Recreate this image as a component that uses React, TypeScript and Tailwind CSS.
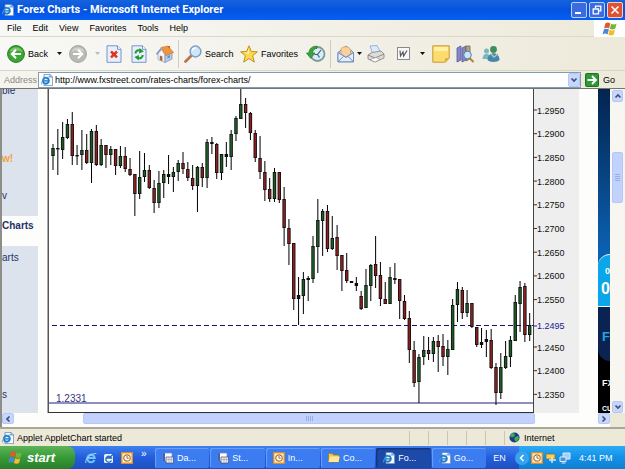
import React from "react";

type Candle = [number, number, number, number, "g" | "r" | "k"];

// high, body top, body bottom, low, colour
const candles: Candle[] = [
  [144, 148, 156, 170, "g"], [129, 148, 149, 175, "k"], [122, 137, 150, 159, "g"], [119, 124, 138, 139, "g"],
  [112, 124, 156, 165, "r"], [145, 155, 156, 165, "k"], [130, 150, 155, 170, "g"], [134, 150, 163, 164, "r"],
  [129, 131, 163, 183, "g"], [125, 131, 165, 166, "r"], [139, 145, 165, 166, "g"], [145, 145, 155, 168, "r"],
  [146, 149, 155, 165, "g"], [149, 149, 166, 175, "r"], [146, 156, 166, 168, "g"], [147, 156, 169, 172, "r"],
  [158, 169, 175, 176, "r"], [174, 174, 194, 216, "r"], [151, 177, 194, 199, "g"], [153, 170, 177, 182, "g"],
  [165, 170, 188, 189, "r"], [180, 188, 203, 213, "r"], [171, 183, 203, 208, "g"], [170, 174, 183, 198, "g"],
  [155, 174, 177, 184, "r"], [167, 172, 177, 192, "g"], [160, 163, 172, 181, "g"], [152, 163, 169, 174, "r"],
  [162, 169, 178, 181, "r"], [165, 178, 186, 190, "r"], [166, 167, 186, 212, "g"], [163, 167, 178, 187, "r"],
  [139, 142, 178, 188, "g"], [137, 142, 144, 154, "k"], [143, 144, 173, 179, "r"], [154, 154, 173, 180, "g"],
  [142, 154, 157, 167, "k"], [130, 134, 157, 170, "g"], [116, 118, 134, 141, "g"], [88, 104, 119, 119, "g"],
  [98, 104, 113, 128, "r"], [112, 113, 133, 140, "r"], [130, 133, 158, 162, "r"], [136, 158, 172, 179, "r"],
  [161, 172, 190, 201, "r"], [178, 189, 199, 202, "r"], [168, 172, 199, 202, "g"], [172, 172, 200, 203, "r"],
  [187, 199, 228, 246, "r"], [219, 228, 244, 265, "r"], [243, 243, 299, 310, "r"], [277, 295, 299, 325, "k"],
  [272, 279, 296, 314, "g"], [276, 278, 280, 301, "k"], [236, 246, 279, 283, "g"], [199, 220, 247, 273, "g"],
  [209, 211, 221, 256, "g"], [205, 211, 249, 252, "r"], [216, 238, 249, 250, "g"], [225, 237, 256, 270, "r"],
  [255, 255, 271, 291, "r"], [253, 270, 281, 283, "r"], [281, 281, 283, 283, "k"], [277, 283, 286, 291, "k"],
  [291, 296, 309, 310, "r"], [269, 285, 308, 308, "g"], [264, 265, 286, 301, "g"], [236, 264, 276, 288, "r"],
  [262, 275, 299, 306, "r"], [282, 299, 304, 304, "r"], [267, 277, 304, 304, "g"], [263, 278, 280, 284, "k"],
  [279, 279, 301, 319, "r"], [295, 301, 319, 320, "r"], [311, 318, 350, 363, "r"], [341, 350, 383, 387, "r"],
  [354, 357, 382, 403, "g"], [336, 350, 357, 365, "g"], [337, 350, 354, 360, "r"], [337, 341, 354, 362, "g"],
  [335, 341, 347, 372, "r"], [334, 346, 357, 366, "r"], [340, 349, 357, 375, "g"], [299, 305, 350, 350, "g"],
  [282, 289, 305, 322, "g"], [287, 290, 313, 319, "r"], [290, 303, 313, 317, "g"], [303, 303, 327, 328, "r"],
  [327, 327, 345, 347, "r"], [328, 342, 345, 348, "g"], [330, 339, 342, 357, "g"], [329, 340, 368, 369, "r"],
  [363, 367, 393, 405, "r"], [353, 367, 393, 399, "g"], [341, 356, 368, 369, "g"], [336, 340, 357, 367, "g"],
  [295, 302, 341, 341, "g"], [281, 287, 304, 332, "g"], [283, 286, 335, 342, "r"], [313, 325, 335, 341, "g"],
];

const fills = { g: "#1c5a26", r: "#8a1f1f", k: "#111111" };

const prices = ["1.2950", "1.2900", "1.2850", "1.2800", "1.2750", "1.2700", "1.2650", "1.2600", "1.2550", "", "1.2450", "1.2400", "1.2350"];

function Chart() {
  return (
    <svg viewBox="47 89 532 324" className="h-[324px] w-[532px] shrink-0" role="img" aria-label="EUR/USD candlestick chart" fontFamily="'Liberation Sans', Arial, sans-serif">
      <rect x="47" y="89" width="487" height="324" fill="#fff" />
      <rect x="534" y="89" width="45" height="324" fill="#eee" />
      <rect x="47" y="89" width="1" height="324" fill="#aaa" />
      <rect x="48" y="89" width="1" height="324" fill="#555" />
      <rect x="533" y="89" width="1" height="324" fill="#4a4238" />
      <rect x="48" y="412" width="486" height="1" fill="#333" />
      <path d="M52 325.5H533" stroke="#14146a" strokeDasharray="5 3" />
      <path d="M49 403H533" stroke="#6a68a8" strokeWidth="1.6" />
      {candles.map(([hi, top, bottom, lo, c], i) => {
        const x = 53 + i * 4.815;
        return (
          <g key={i}>
            <rect x={x - 0.5} y={hi} width="1" height={lo - hi} fill="#000" />
            <rect x={x - 1.7} y={top} width="3.4" height={Math.max(bottom - top, 1.4)} fill="#0c0c0c" />
            {bottom - top > 3 && <rect x={x - 0.9} y={top + 0.8} width="1.8" height={bottom - top - 1.6} fill={fills[c]} />}
          </g>
        );
      })}
      {prices.map((p, i) =>
        p ? (
          <g key={p}>
            <path d={`M533 ${110 + i * 23.7}h4`} stroke="#333" />
            <text x="537" y={113.5 + i * 23.7} fontSize="9" fill="#111">{p}</text>
          </g>
        ) : null
      )}
      <path d="M533 326h4" stroke="#1a1a90" />
      <text x="537" y="329" fontSize="9" fill="#1a1a90">1.2495</text>
      <text x="56" y="402" fontSize="10" fill="#34347e">1.2331</text>
    </svg>
  );
}

function IePage({ className = "size-3" }: { className?: string }) {
  return (
    <svg viewBox="0 0 16 16" className={`${className} shrink-0`} aria-hidden="true">
      <path d="M4 .5h8l3.5 3.5v11.5H4z" fill="#f8fbff" stroke="#5a7fb8" />
      <path d="M12 .5V4h3.5" fill="#bcd3f2" stroke="#5a7fb8" />
      <circle cx="6.5" cy="9" r="4" fill="#e8f6ff" stroke="#1f78c8" strokeWidth="2.4" />
      <path d="M3 9.2h7.5" stroke="#1f78c8" strokeWidth="1.8" />
      <path d="M1 14C-1 10 7 3 12 4" fill="none" stroke="#4aa6e0" strokeWidth="1.2" />
    </svg>
  );
}

function Flag({ className }: { className: string }) {
  return (
    <svg viewBox="0 0 20 18" className={`${className} shrink-0`} aria-hidden="true">
      <path d="M4 2c2-1.6 4-1.6 6.4-.2L8.8 8.4C6.600 7 4.600 7.200 2.400 8.400z" fill="#e4582c" />
      <path d="M11.400 2.300c2.400 1.400 4.600 1.400 7 .1l-1.700 6.400c-2.300 1.300-4.500 1.200-6.900 0z" fill="#74b43c" />
      <path d="M2.100 9.500c2.200-1.300 4.200-1.300 6.400 0L6.900 16C4.800 14.500 2.600 14.600.4 16z" fill="#4b86dc" />
      <path d="M9.500 9.900c2.400 1.400 4.600 1.300 6.900.1L14.700 16.400c-2.300 1.300-4.500 1.200-6.900-.1z" fill="#f4bd2c" />
    </svg>
  );
}

function Arrow({ green }: { green?: boolean }) {
  return (
    <svg viewBox="0 0 18 18" className="size-[18px] shrink-0" aria-hidden="true">
      <circle cx="9" cy="9" r="8.400" fill={green ? "#3da733" : "#b9b9b6"} stroke={green ? "#237a20" : "#a3a3a0"} />
      <path d="M2.500 7A7 7 0 0 1 15.500 7Q9 3.500 2.500 7" fill="#fff" opacity=".35" />
      <path d={green ? "M14 9H5.500M9 4.800L4.800 9 9 13.200" : "M4 9h8.500M9 4.800L13.200 9 9 13.200"} fill="none" stroke="#fff" strokeWidth="2.100" />
    </svg>
  );
}

function Caret({ faded }: { faded?: boolean }) {
  return (
    <svg viewBox="0 0 5 3" className="h-[3px] w-[5px] shrink-0" aria-hidden="true">
      <path d="M0 0h5L2.500 3z" fill={faded ? "#bbb" : "#111"} />
    </svg>
  );
}

function StopIcon() {
  return (
    <svg viewBox="0 0 16 18" className="h-[18px] w-4" aria-hidden="true">
      <path d="M1 .8h10.500L15 4.300v13H1z" fill="#e6effd" stroke="#7794c8" />
      <path d="M11.500.8v3.500H15" fill="#fff" stroke="#7794c8" />
      <path d="M5 6.500l6 5.800M11 6.500l-6 5.800" stroke="#e03418" strokeWidth="2.500" />
    </svg>
  );
}

function RefreshIcon() {
  return (
    <svg viewBox="0 0 16 18" className="h-[18px] w-4" aria-hidden="true">
      <path d="M1 .8h10.500L15 4.300v13H1z" fill="#e6effd" stroke="#7794c8" />
      <path d="M11.500.8v3.500H15" fill="#fff" stroke="#7794c8" />
      <path d="M4.500 8.500c0-3 3-4 5.500-2.800" fill="none" stroke="#1f9a2c" strokeWidth="2" />
      <path d="M8.500 3l4.300 3.400-4.600 2z" fill="#1f9a2c" />
      <path d="M11.700 10c0 3-3 4-5.500 2.800" fill="none" stroke="#1f9a2c" strokeWidth="2" />
      <path d="M7.700 15.500L3.400 12.100l4.600-2z" fill="#1f9a2c" />
    </svg>
  );
}

function HomeIcon() {
  return (
    <svg viewBox="0 0 19 18" className="h-[18px] w-[19px]" aria-hidden="true">
      <path d="M3 8v6.500l7 3V9.500L6 4z" fill="#f2f5fb" stroke="#8b9cc0" strokeWidth=".7" />
      <path d="M10 9.500v8l7-3.500V7z" fill="#b9cbec" stroke="#7189bb" strokeWidth=".7" />
      <path d="M6 2.500L.8 9l1.400 1L6.300 5z" fill="#8498c0" />
      <path d="M6 2.500l7-1.500 5.500 6.500-7.500 3z" fill="#f0953e" stroke="#c96e1e" strokeWidth=".6" />
      <path d="M12.500 1h2.500v3" fill="#cf5b30" />
      <path d="M4.800 10.500l2.600.9v4.800l-2.600-1.100z" fill="#a76a34" />
      <path d="M12.500 11l2.500-1v2.500l-2.500 1z" fill="#6390d6" />
    </svg>
  );
}

function SearchIcon({ className = "size-[18px]" }: { className?: string }) {
  return (
    <svg viewBox="0 0 18 18" className={className} aria-hidden="true">
      <path d="M1.500 16.500l6-6" stroke="#b87649" strokeWidth="2.800" strokeLinecap="round" />
      <circle cx="11.500" cy="6.500" r="5.400" fill="#cce7fa" stroke="#7f9ec8" strokeWidth="1.500" />
      <path d="M8.300 5.500c.6-1.600 1.800-2.400 3.400-2.400" fill="none" stroke="#fff" strokeWidth="1.500" />
    </svg>
  );
}

function StarIcon() {
  return (
    <svg viewBox="0 0 18 18" className="size-[18px]" aria-hidden="true">
      <path d="M9 .8l2.300 5.700 6.100.3-4.800 3.900 1.700 6.400L9 13.500l-5.300 3.600 1.700-6.400L.6 6.800l6.100-.3z" fill="#fcd84e" stroke="#c4901a" />
      <path d="M9 3v6L4 7.800l3.500-.3z" fill="#fff4b4" />
    </svg>
  );
}

function HistoryIcon() {
  return (
    <svg viewBox="0 0 20 18" className="h-[18px] w-5" aria-hidden="true">
      <circle cx="11.500" cy="9" r="7" fill="#dcecf6" stroke="#7b9a98" strokeWidth="1.800" />
      <path d="M11.500 9.500L15 5M11.500 9.500H8.500M11.500 9.500l2 3" stroke="#375f86" strokeWidth="1.200" />
      <path d="M11 1.200C6 1 3 4 3 8H.5l4.200 5.300L9 8H6.500c0-3 2-4.500 4.500-4.600z" fill="#3ca53a" stroke="#1d7423" strokeWidth=".7" />
    </svg>
  );
}

function MailIcon() {
  return (
    <svg viewBox="0 0 18 18" className="size-[18px]" aria-hidden="true">
      <path d="M1 7.500L9 1l7.500 6.500v9.300H1z" fill="#b5cdf0" stroke="#6e8cc0" />
      <path d="M4 3.500c3-2.800 8-2 9.500.8V9L9 12 4 9z" fill="#fbd09a" stroke="#d59a5c" strokeWidth=".7" />
      <path d="M1 7.500l8 5 7.500-5v9.300H1z" fill="#e3effc" stroke="#6e8cc0" />
      <path d="M1 16.800l5.500-5.500M16.500 16.800L11 11.300" stroke="#6e8cc0" />
    </svg>
  );
}

function PrinterIcon() {
  return (
    <svg viewBox="0 0 18 18" className="size-[18px]" aria-hidden="true">
      <path d="M3 1l7-.5 4 7.500-8 1.500z" fill="#dcebfc" stroke="#88a2cc" strokeWidth=".8" />
      <path d="M1 10l4-2.500 9-1.500 3 3v4l-9 4L1 14z" fill="#dddcd6" stroke="#808080" strokeWidth=".8" />
      <path d="M1 10l7 3 9-4" fill="none" stroke="#777" strokeWidth=".8" />
      <path d="M3 14.500l6-2 4 2-5 2.500z" fill="#fff" stroke="#888" strokeWidth=".6" />
    </svg>
  );
}

function WordIcon() {
  return (
    <svg viewBox="0 0 13 13" className="size-[13px]" aria-hidden="true">
      <rect x=".5" y=".5" width="12" height="12" fill="#f8f8f8" stroke="#8a8a8a" />
      <path d="M3 3.500l.5 5.500L6 5l.6 4L10 3.500" fill="none" stroke="#555" strokeWidth="1.200" />
    </svg>
  );
}

function NoteIcon() {
  return (
    <svg viewBox="0 0 18 18" className="size-[18px]" aria-hidden="true">
      <path d="M.8.8h16.400v12.500l-4 3.900H.8z" fill="#fbdc6c" stroke="#c69a34" />
      <path d="M2 2h14v4H2z" fill="#fff0a4" />
      <path d="M17 13.300h-4V17z" fill="#e3a737" />
    </svg>
  );
}

function BooksIcon() {
  return (
    <svg viewBox="0 0 18 18" className="size-[18px]" aria-hidden="true">
      <path d="M1 3l4-2v14l-4 2zM6 3l4-2v14l-4 2z" fill="#8588c8" stroke="#55589a" strokeWidth=".8" />
      <path d="M10 1h4v13l-4 2z" fill="#b8a078" stroke="#77694a" strokeWidth=".8" />
      <path d="M13.500 13l4 4" stroke="#b48736" strokeWidth="2" />
      <circle cx="11.500" cy="10" r="3.800" fill="#c5e6fa" stroke="#5b7fae" />
    </svg>
  );
}

function MessengerIcon() {
  return (
    <svg viewBox="0 0 18 18" className="size-[18px]" aria-hidden="true">
      <circle cx="4.500" cy="6" r="2.500" fill="#7bb7c2" />
      <path d="M.5 14c0-7 8-7 8 0z" fill="#7bb7c2" />
      <circle cx="11.500" cy="4.500" r="3.400" fill="#3f8c5c" />
      <path d="M5.500 15c0-9 12-9 12 0-2 2.500-10 2.500-12 0z" fill="#4a84ac" />
      <path d="M9 9l3 3 4-3" stroke="#99d0b0" strokeWidth="1.500" fill="none" />
    </svg>
  );
}

function Chevron({ dir }: { dir: "up" | "down" | "left" | "right" }) {
  const d = { up: "M1.500 5.500L4 3l2.500 2.500", down: "M1.500 2.500L4 5l2.500-2.500", left: "M5.500 1.500L3 4l2.500 2.500", right: "M2.500 1.500L5 4 2.500 6.500" }[dir];
  return (
    <svg viewBox="0 0 8 8" className="size-2" aria-hidden="true">
      <path d={d} fill="none" stroke="#40507c" strokeWidth="1.700" />
    </svg>
  );
}

const scrollButton = "flex shrink-0 items-center justify-center rounded-xs border border-[#b4c8f6] bg-[#c8d6fb]";

function ClockIcon() {
  return (
    <svg viewBox="0 0 12 12" className="size-3 shrink-0" aria-hidden="true">
      <rect x=".7" y=".7" width="10.600" height="10.600" fill="#fff2cf" stroke="#d98d2c" strokeWidth="1.400" />
      <circle cx="6" cy="6" r="3.200" fill="#fff" stroke="#b9752a" strokeWidth="1.200" />
      <path d="M6 4v2.200h1.700" fill="none" stroke="#8a5620" strokeWidth=".9" />
    </svg>
  );
}

function DocIcon() {
  return (
    <svg viewBox="0 0 12 12" className="size-3 shrink-0" aria-hidden="true">
      <path d="M1 1h9v8H1z" fill="#fff" stroke="#7388b8" strokeWidth=".7" />
      <path d="M1 1h2v8H1z" fill="#4464b0" />
      <path d="M4 5h7.500v6H4z" fill="#e8edf8" stroke="#4a4a60" strokeWidth=".7" />
      <path d="M5 7.500h6M7 5.500V10M9.300 5.500V10" stroke="#99a" strokeWidth=".6" />
    </svg>
  );
}

function FolderIcon() {
  return (
    <svg viewBox="0 0 12 11" className="h-[11px] w-3 shrink-0" aria-hidden="true">
      <path d="M.5 1.500h4l1 1.500H11v7H.5z" fill="#efc44c" stroke="#9d7a24" strokeWidth=".7" />
      <path d="M2 4.500h9.700L10.500 10H.5z" fill="#fde993" />
    </svg>
  );
}

function IeLetter() {
  return (
    <svg viewBox="0 0 12 12" className="size-3 shrink-0" aria-hidden="true">
      <path d="M9.500 8A3.800 3.800 0 1 1 9.800 6H3" fill="none" stroke="#6fc3f8" strokeWidth="2" />
      <path d="M1 11C-1 8 6 1 11.300 1.500" fill="none" stroke="#a9dcff" />
    </svg>
  );
}

function ExpressIcon() {
  return (
    <svg viewBox="0 0 12 12" className="size-3 shrink-0" aria-hidden="true">
      <rect x="1" y="2" width="9" height="9" rx="1.500" fill="#e6f2fd" />
      <path d="M8.500 8.500A3 3 0 1 1 8.500 6H3.500M6 6l5-4.500" fill="none" stroke="#2a68b8" strokeWidth="1.300" />
    </svg>
  );
}

const tasks = [
  { label: "Da...", icon: <DocIcon /> },
  { label: "St...", icon: <DocIcon /> },
  { label: "In...", icon: <ClockIcon /> },
  { label: "Co...", icon: <FolderIcon /> },
  { label: "Fo...", icon: <IePage />, active: true },
  { label: "Go...", icon: <IePage /> },
];

export default function App() {
  return (
    <div className="flex h-screen flex-col overflow-hidden bg-[#ece9d8] font-['Liberation_Sans',Arial,sans-serif] text-[9px] leading-3 text-black">
      <header className="flex h-5 shrink-0 items-center bg-linear-to-b from-[#1663dc] via-[#0452e0] to-[#0560f4] pr-0.5 pl-0.5">
        <IePage />
        <h1 className="ml-[3px] flex-1 font-[Roboto,sans-serif] text-[11px] font-bold text-white">Forex Charts - Microsoft Internet Explorer</h1>
        <div className="flex gap-0.5">
          <button aria-label="Minimize" className="flex size-4 items-end rounded-xs border border-[#bcd0f8] bg-[#3a6ce0] p-[3px]"><span className="h-0.5 w-1.5 bg-white" /></button>
          <button aria-label="Restore" className="flex size-4 items-center justify-center rounded-xs border border-[#bcd0f8] bg-[#3a6ce0]">
            <svg viewBox="0 0 10 10" className="size-2.5" aria-hidden="true"><path d="M3.500 3V1.200h5.300v4.600H7M1.200 4h5.300v4.800H1.200z" fill="none" stroke="#fff" strokeWidth="1.300" /></svg>
          </button>
          <button aria-label="Close" className="flex size-4 items-center justify-center rounded-xs border border-[#f3cfc8] bg-[#de5133]">
            <svg viewBox="0 0 10 10" className="size-2.5" aria-hidden="true"><path d="M1.500 1.500l7 7M8.500 1.500l-7 7" stroke="#fff" strokeWidth="1.700" /></svg>
          </button>
        </div>
      </header>

      <nav className="flex h-[17px] shrink-0 items-stretch bg-linear-to-r from-[#f8f8f6] to-[#edeadb]">
        <div className="flex flex-1 items-center gap-[11px] border-b border-[#dcd8c8] pl-[7px]">
          {["File", "Edit", "View", "Favorites", "Tools", "Help"].map((m) => (
            <button key={m}>{m}</button>
          ))}
        </div>
        <div className="flex w-[31px] items-center justify-center bg-white"><Flag className="h-3.5 w-4" /></div>
      </nav>

      <div className="flex h-[34px] shrink-0 items-center border-b border-[#dad6c6] bg-linear-to-r from-[#f8f8f6] to-[#edeadb] pl-[7px]">
        <button className="flex w-[62px] items-center gap-[3px]"><Arrow green />Back<span className="ml-1.5"><Caret /></span></button>
        <button aria-label="Forward" className="flex w-[37px] items-center gap-2"><Arrow /><Caret faded /></button>
        <button aria-label="Stop" className="w-[25px]"><StopIcon /></button>
        <button aria-label="Refresh" className="w-6"><RefreshIcon /></button>
        <button aria-label="Home" className="w-[23px]"><HomeIcon /></button>
        <span className="h-7 w-px bg-[#cfccbd]" />
        <button className="ml-[5px] flex w-14 items-center gap-[3px]"><SearchIcon />Search</button>
        <button className="flex w-[66px] items-center gap-[3px]"><StarIcon />Favorites</button>
        <button aria-label="History" className="w-6"><HistoryIcon /></button>
        <span className="h-7 w-px bg-[#cfccbd]" />
        <button aria-label="Mail" className="ml-1.5 flex w-[30px] items-center gap-0.5"><MailIcon /><Caret /></button>
        <button aria-label="Print" className="w-[30px]"><PrinterIcon /></button>
        <button aria-label="Edit with Word" className="flex w-[35px] items-center gap-2.5"><WordIcon /><Caret /></button>
        <button aria-label="Notes" className="w-6"><NoteIcon /></button>
        <button aria-label="Research" className="w-[26px]"><BooksIcon /></button>
        <button aria-label="Messenger"><MessengerIcon /></button>
      </div>

      <form className="flex h-[18px] shrink-0 items-center border-b border-[#77756c] bg-linear-to-r from-[#f5f4ef] to-[#edeadb] pl-1" onSubmit={(e) => e.preventDefault()}>
        <label htmlFor="address" className="w-[34px] text-[#8b8a83]">Address</label>
        <div className="flex h-4 flex-1 items-center border border-[#7f9db9] bg-white pl-0.5">
          <IePage />
          <input id="address" className="ml-0.5 min-w-0 flex-1 bg-transparent outline-none" defaultValue="http://www.fxstreet.com/rates-charts/forex-charts/" />
          <button type="button" aria-label="Show addresses" className={`h-3.5 w-3 ${scrollButton}`}><Chevron dir="down" /></button>
        </div>
        <button className="ml-1 flex w-10 items-center gap-1">
          <svg viewBox="0 0 14 14" className="size-3.5" aria-hidden="true">
            <rect x=".5" y=".5" width="13" height="13" rx="1" fill="#2f9a35" stroke="#1b7020" />
            <path d="M2.500 7h8M7 3l4 4-4 4" fill="none" stroke="#fff" strokeWidth="1.800" />
          </svg>
          Go
        </button>
      </form>

      <div className="flex min-h-0 flex-1 border-l-2 border-[#8e8e88] bg-[#fdfdfb]">
        <div className="flex min-w-0 flex-1 flex-col">
          <main className="flex min-h-0 flex-1 overflow-hidden">
            <aside className="flex w-9 shrink-0 flex-col overflow-hidden text-[10px] text-[#1b3468]">
              <div className="h-[127px] shrink-0 bg-[#dce3ec]">
                <a href="#table" className="-mt-1 block">ble</a>
                <a href="#new" className="mt-14 block font-bold text-[#f2a13c]">w!</a>
                <a href="#view" className="mt-[25px] block">v</a>
              </div>
              <a href="#charts" className="flex h-[30px] shrink-0 items-start pt-1 text-[10px] font-bold">Charts</a>
              <div className="flex flex-1 flex-col justify-between bg-[#dce3ec] pt-1.5 pb-3">
                <a href="#arts">arts</a>
                <a href="#s">s</a>
              </div>
            </aside>
            <div className="w-[9px] shrink-0" />
            <Chart />
            <div className="flex-1" />
            <aside className="flex w-3 shrink-0 flex-col overflow-hidden bg-[#0b62b4] font-bold text-white">
              <div className="h-[165px] shrink-0 bg-linear-to-b from-[#04244f] to-[#0b62b4]" />
              <div className="flex h-[53px] shrink-0 flex-col items-end overflow-hidden rounded-tl-[12px] border-t border-b border-white bg-[#0ba5ea]">
                <span className="mt-2.5">0</span>
                <span className="mt-1 text-base leading-4">0</span>
              </div>
              <div className="h-[54px] shrink-0 bg-black">
                <div className="h-full rounded-bl-[12px] bg-[#0b2350] pt-6 pl-1 text-[13px] text-[#21a4e8]">F</div>
              </div>
              <div className="flex flex-1 flex-col justify-between bg-black pt-4 pl-1 whitespace-nowrap">
                <span>FX</span>
                <span className="text-[7px] leading-2">CUR</span>
              </div>
            </aside>
          </main>
          <div className="flex h-3.5 shrink-0 items-start">
            <button aria-label="Scroll left" className={`h-[11px] w-3 ${scrollButton}`}><Chevron dir="left" /></button>
            <div className="flex flex-1 pr-[63px] pl-[69px]">
              <div className="flex h-[11px] flex-1 items-center justify-center gap-px rounded-xs border border-[#b4c8f6] bg-[#c3d2fd]">
                {[0, 1, 2, 3].map((i) => <span key={i} className="h-[5px] w-px bg-[#94aee8]" />)}
              </div>
            </div>
            <button aria-label="Scroll right" className={`h-[11px] w-3 ${scrollButton}`}><Chevron dir="right" /></button>
          </div>
        </div>
        <div className="flex w-[15px] shrink-0 flex-col items-center bg-[#f7f6f0]">
          <button aria-label="Scroll up" className={`mt-px h-3 w-[11px] ${scrollButton}`}><Chevron dir="up" /></button>
          <div className="mt-[50px] flex h-[51px] w-[11px] flex-col items-center justify-center gap-px rounded-xs border border-[#b4c8f6] bg-[#c3d2fd]">
            {[0, 1, 2, 3].map((i) => <span key={i} className="h-px w-[5px] bg-[#94aee8]" />)}
          </div>
          <div className="flex-1" />
          <button aria-label="Scroll down" className={`h-3 w-[11px] ${scrollButton}`}><Chevron dir="down" /></button>
          <div className="h-3.5 w-full shrink-0 bg-[#ece9d8]" />
        </div>
      </div>

      <footer className="shrink-0">
        <div className="flex h-[19px] items-center border-t-2 border-[#aaa79a] bg-[#ece9d8] pl-0.5">
          <IePage />
          <span className="ml-[3px] flex-1">Applet AppletChart started</span>
          {[0, 1, 2, 3, 4].map((i) => <span key={i} className="h-3.5 w-[19px] border-l border-[#c9c5b2]" />)}
          <span className="flex h-3.5 w-[121px] items-center gap-1 border-l border-[#c9c5b2] pl-1">
            <svg viewBox="0 0 12 12" className="size-[11px]" aria-hidden="true">
              <circle cx="6" cy="6" r="5.500" fill="#1a3a8c" />
              <path d="M3 1.500c3-1 4 1 3 3L3.500 6 1 4.500zM6 6l4-2 1 3-3 4-2-2z" fill="#3fae49" />
            </svg>
            Internet
          </span>
        </div>

        <div className="flex h-[23px] items-stretch bg-linear-to-b from-[#3f80ee] via-[#245ddb] to-[#1d4fc0] text-white">
          <button className="flex w-[75px] items-center gap-1 rounded-r-lg bg-linear-to-b from-[#5db457] via-[#379a37] to-[#2a7d2c] pl-2 text-[13px] font-bold italic">
            <Flag className="h-[15px] w-[15px]" />start
          </button>
          <div className="flex w-20 items-center gap-1.5 pl-2.5">
            <button aria-label="Internet Explorer"><IeLetter /></button>
            <button aria-label="Outlook Express"><ExpressIcon /></button>
            <button aria-label="Outlook"><ClockIcon /></button>
            <button aria-label="More" className="mb-2 ml-0.5 text-[10px]">»</button>
          </div>
          <div className="flex flex-1 items-center gap-px">
            {tasks.map((t) => (
              <button key={t.label} className={`flex h-5 flex-1 items-center gap-[3px] rounded-xs pl-[7px] ${t.active ? "bg-[#1c4aa8] shadow-[inset_1px_1px_2px_#10306e]" : "bg-[#3b7cf0] shadow-[inset_1px_1px_1px_#6ca0ff]"}`}>
                {t.icon}{t.label}
              </button>
            ))}
          </div>
          <button className="w-[33px] pr-1.5">EN</button>
          <div className="flex w-[106px] items-center gap-0.5 bg-linear-to-b from-[#2cabf3] via-[#1290e8] to-[#0f80d0]">
            <button aria-label="Show hidden icons" className="-ml-1 flex size-3.5 items-center justify-center rounded-full bg-[#35a3f0]">
              <svg viewBox="0 0 8 8" className="size-2" aria-hidden="true"><path d="M5.500 1L2.500 4l3 3" fill="none" stroke="#fff" strokeWidth="1.500" /></svg>
            </button>
            <ClockIcon />
            <svg viewBox="0 0 12 12" className="size-3" aria-hidden="true">
              <path d="M1 2h9v5H1z" fill="#f5ce54" stroke="#8b681e" strokeWidth=".7" />
              <path d="M4 8h7M7 5v6" stroke="#dfe4ee" strokeWidth="1.500" />
            </svg>
            <svg viewBox="0 0 12 12" className="size-3" aria-hidden="true">
              <path d="M4 1h7v6H4z" fill="#9cd0fa" stroke="#dceaf6" />
              <path d="M1 5h6v4.500H1zM2.500 11h4" fill="#4f91de" stroke="#dceaf6" />
            </svg>
            <time className="ml-1.5 whitespace-nowrap">4:41 PM</time>
          </div>
        </div>
      </footer>
    </div>
  );
}
